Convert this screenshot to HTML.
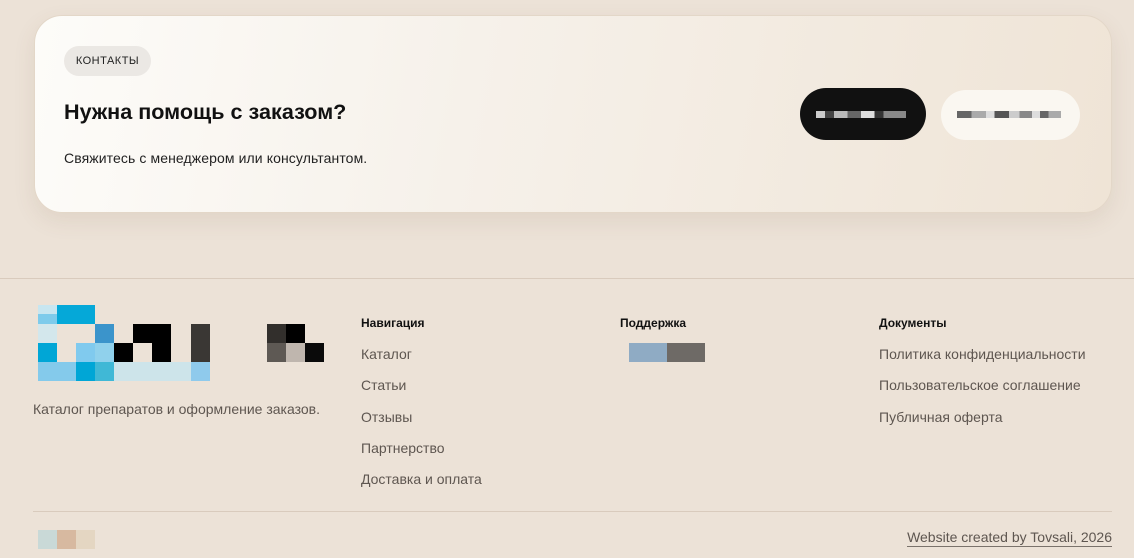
<!DOCTYPE html>
<html><head><meta charset="utf-8"><style>
*{margin:0;padding:0;box-sizing:border-box}
body{width:1134px;height:558px;overflow:hidden;background:#ece2d7;font-family:"Liberation Sans","DejaVu Sans",sans-serif;position:relative}
.a{position:absolute}
.card{left:34px;top:15px;width:1078px;height:198px;border-radius:28px;background:linear-gradient(100deg,#fdfcf9 0%,#f6f1ea 40%,#efe4d6 100%);border:1px solid #e3d7c8;box-shadow:0 8px 22px rgba(120,90,60,.10)}
.tag{left:64px;top:46px;width:87px;height:30px;border-radius:15px;background:#ebe8e4;font-size:11px;letter-spacing:.5px;color:#222;text-align:center;line-height:30px}
h2{position:absolute;left:64px;top:99px;font-size:21.6px;font-weight:bold;color:#111}
.sub{left:64px;top:150px;font-size:14px;letter-spacing:.1px;color:#222}
.line{left:0;width:1134px;height:1px;background:#d9cbbd}
.h{font-size:12px;font-weight:bold;color:#111}
.l{font-size:14px;color:#5e5650}
.c{position:absolute;width:19px;height:19px}
</style></head><body>
<div class="a card"></div>
<div class="a tag">КОНТАКТЫ</div>
<h2>Нужна помощь с заказом?</h2>
<div class="a sub">Свяжитесь с менеджером или консультантом.</div>
<div class="a" style="left:800px;top:88px;width:126px;height:52px;border-radius:26px;background:#111"></div>
<div class="a" style="left:816px;top:111px;width:90px;height:7px;background:linear-gradient(90deg,#ccc 0 10%,#444 10% 20%,#bbb 20% 35%,#666 35% 50%,#ddd 50% 65%,#333 65% 75%,#888 75%)"></div>
<div class="a" style="left:941px;top:90px;width:139px;height:50px;border-radius:25px;background:#faf7f1"></div>
<div class="a" style="left:957px;top:111px;width:104px;height:7px;background:linear-gradient(90deg,#666 0 14%,#aaa 14% 28%,#ddd 28% 36%,#555 36% 50%,#ccc 50% 60%,#888 60% 72%,#ddd 72% 80%,#666 80% 88%,#aaa 88%)"></div>
<div class="a line" style="top:278px"></div>

<div class="c" style="left:38px;top:305px;height:9px;background:#c8e6f0"></div>
<div class="c" style="left:38px;top:314px;height:10px;background:#7ecbeb"></div>
<div class="c" style="left:57px;top:305px;width:38px;background:#05a8d8"></div>
<div class="c" style="left:38px;top:324px;background:#d3e7ec"></div>
<div class="c" style="left:95px;top:324px;background:#3b94cb"></div>
<div class="c" style="left:133px;top:324px;width:38px;background:#000"></div>
<div class="c" style="left:191px;top:324px;background:#3a3734"></div>
<div class="c" style="left:267px;top:324px;background:#322f2c"></div>
<div class="c" style="left:286px;top:324px;background:#000"></div>
<div class="c" style="left:38px;top:343px;background:#00a6d6"></div>
<div class="c" style="left:76px;top:343px;background:#80caee"></div>
<div class="c" style="left:95px;top:343px;background:#90d1ec"></div>
<div class="c" style="left:114px;top:343px;background:#000"></div>
<div class="c" style="left:152px;top:343px;background:#000"></div>
<div class="c" style="left:191px;top:343px;background:#3a3734"></div>
<div class="c" style="left:267px;top:343px;background:#5e5954"></div>
<div class="c" style="left:286px;top:343px;background:#bfb6ae"></div>
<div class="c" style="left:305px;top:343px;background:#0a0a0a"></div>
<div class="c" style="left:38px;top:362px;width:38px;background:#84caeb"></div>
<div class="c" style="left:76px;top:362px;background:#00a6d6"></div>
<div class="c" style="left:95px;top:362px;background:#40b8d6"></div>
<div class="c" style="left:114px;top:362px;width:77px;background:#cde4ea"></div>
<div class="c" style="left:191px;top:362px;background:#8fcaec"></div>
<div class="a l" style="left:33px;top:401px">Каталог препаратов и оформление заказов.</div>

<div class="a h" style="left:361px;top:316px">Навигация</div>
<div class="a l" style="left:361px;top:346px">Каталог</div>
<div class="a l" style="left:361px;top:377px">Статьи</div>
<div class="a l" style="left:361px;top:409px">Отзывы</div>
<div class="a l" style="left:361px;top:440px">Партнерство</div>
<div class="a l" style="left:361px;top:471px">Доставка и оплата</div>

<div class="a h" style="left:620px;top:316px">Поддержка</div>
<div class="a" style="left:629px;top:343px;width:38px;height:19px;background:#8fabc4"></div>
<div class="a" style="left:667px;top:343px;width:38px;height:19px;background:#6e6a66"></div>

<div class="a h" style="left:879px;top:316px">Документы</div>
<div class="a l" style="left:879px;top:346px">Политика конфиденциальности</div>
<div class="a l" style="left:879px;top:377px">Пользовательское соглашение</div>
<div class="a l" style="left:879px;top:409px">Публичная оферта</div>

<div class="a line" style="top:511px;left:33px;width:1079px"></div>
<div class="a" style="left:38px;top:530px;width:19px;height:19px;background:#c9d9d7"></div>
<div class="a" style="left:57px;top:530px;width:19px;height:19px;background:#d7b9a0"></div>
<div class="a" style="left:76px;top:530px;width:19px;height:19px;background:#e4d6c2"></div>
<div class="a l" style="right:22px;top:528px;border-bottom:1px solid #7a726b;line-height:18px">Website created by Tovsali, 2026</div>
</body></html>
